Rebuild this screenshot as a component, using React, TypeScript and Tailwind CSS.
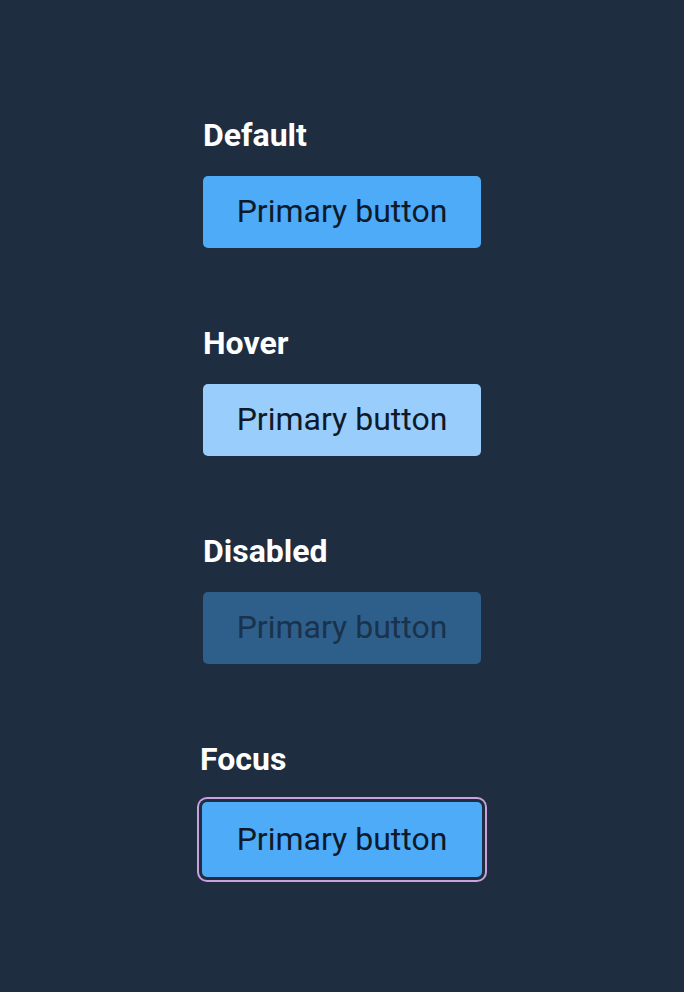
import React from 'react';

type Variant = 'default' | 'hover' | 'disabled' | 'focus';

const states: { label: string; variant: Variant }[] = [
  { label: 'Default', variant: 'default' },
  { label: 'Hover', variant: 'hover' },
  { label: 'Disabled', variant: 'disabled' },
  { label: 'Focus', variant: 'focus' },
];

function PrimaryButton({ variant }: { variant: Variant }) {
  const base = 'flex items-center justify-center rounded-[5px] text-[32px] leading-none pb-[2px]';
  if (variant === 'hover') {
    return <button className={`${base} w-[278px] h-[72px] bg-[#99cdfb] text-[#0e1a29]`}>Primary button</button>;
  }
  if (variant === 'disabled') {
    return (
      <button disabled className={`${base} w-[278px] h-[72px] bg-[#2e5f8b] text-[#1a324c]`}>
        Primary button
      </button>
    );
  }
  if (variant === 'focus') {
    return (
      <button
        className={`${base} w-[280px] h-[75px] ml-[-1px] mt-[2px] bg-[#4dabf8] text-[#0e1a29] shadow-[0_0_0_3px_#1e2d3f,0_0_0_5px_#c9a1dd]`}
      >
        Primary button
      </button>
    );
  }
  return <button className={`${base} w-[278px] h-[72px] bg-[#4dabf8] text-[#0e1a29]`}>Primary button</button>;
}

export default function App() {
  return (
    <div className="min-h-[992px] w-full bg-[#1e2d3f] font-['Roboto',sans-serif] pt-[116px] pl-[203px]">
      <div className="flex flex-col gap-[76px]">
        {states.map((s) => (
          <div key={s.label} className="flex flex-col">
            <div
              className={`h-[32px] leading-[38px] mb-[28px] text-[32px] font-bold text-white ${
                s.variant === 'focus' ? 'ml-[-3px]' : ''
              }`}
            >
              {s.label}
            </div>
            <PrimaryButton variant={s.variant} />
          </div>
        ))}
      </div>
    </div>
  );
}
